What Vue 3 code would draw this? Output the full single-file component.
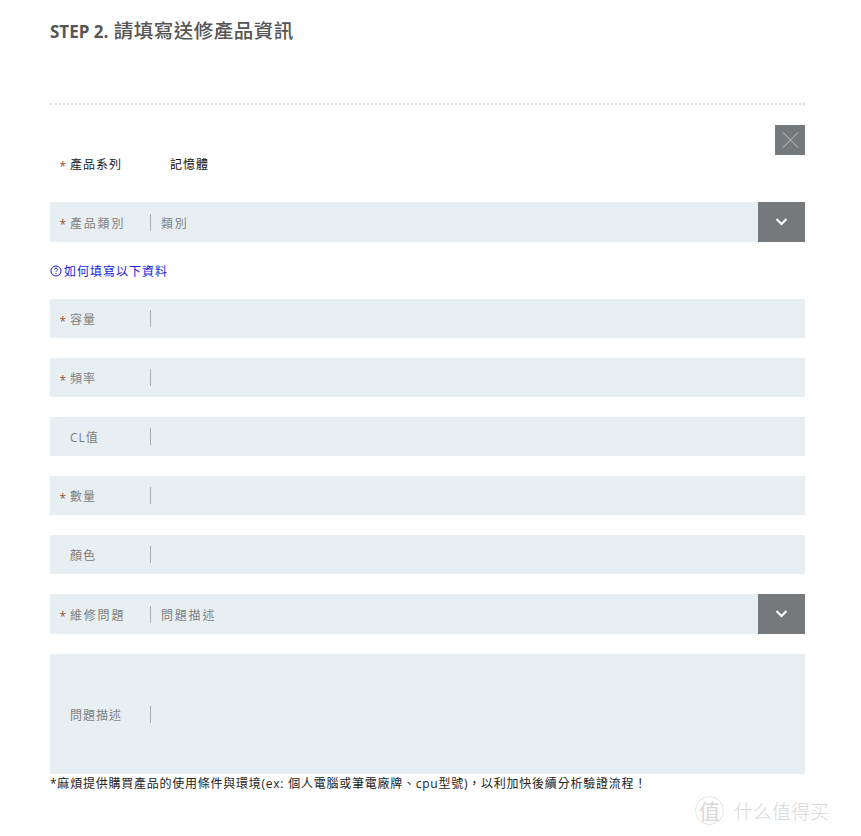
<script setup>
const rows = [
  { label: "容量", required: true },
  { label: "頻率", required: true },
  { label: "CL值", required: false },
  { label: "數量", required: true },
  { label: "顏色", required: false },
];
</script>

<template>
  <div class="page">
    <h2 class="title">STEP 2. <span class="title-cjk">請填寫送修產品資訊</span></h2>
    <div class="dots"></div>

    <div class="close-wrap">
      <button class="close" type="button">
        <svg width="30" height="30" viewBox="0 0 30 30">
          <path d="M8 7.5 23 22.5M23 7.5 8 22.5" stroke="#c4c6c8" stroke-width="1" fill="none" />
        </svg>
      </button>
    </div>

    <div class="series">
      <span class="star">*</span>
      <span class="series-label">產品系列</span>
      <span class="series-value">記憶體</span>
    </div>

    <div class="row select-row first-select">
      <span class="star">*</span>
      <span class="label wide">產品類別</span>
      <span class="value wide">類別</span>
      <span class="arrow">
        <svg width="14" height="10" viewBox="0 0 14 10">
          <path d="M1.5 2 6.5 7 11.5 2" stroke="#fff" stroke-width="2" fill="none" />
        </svg>
      </span>
    </div>

    <a class="help">
      <svg width="12" height="12" viewBox="0 0 12 12">
        <circle cx="6" cy="6" r="5" stroke="#1a1ae6" stroke-width="1" fill="none" />
        <path d="M4.4 4.8C4.4 3.8 5.1 3.2 6 3.2S7.6 3.8 7.6 4.6C7.6 5.6 6 5.8 6 7.1" stroke="#1a1ae6" stroke-width="1" fill="none" />
        <path d="M6 8.1V9.1" stroke="#1a1ae6" stroke-width="1" />
      </svg>
      <span>如何填寫以下資料</span>
    </a>

    <div class="list">
      <div v-for="r in rows" :key="r.label" class="row">
        <span class="star">{{ r.required ? "*" : "" }}</span>
        <span class="label">{{ r.label }}</span>
        <span class="value"></span>
      </div>
    </div>

    <div class="row select-row problem-select">
      <span class="star">*</span>
      <span class="label wide">維修問題</span>
      <span class="value wide">問題描述</span>
      <span class="arrow">
        <svg width="14" height="10" viewBox="0 0 14 10">
          <path d="M1.5 2 6.5 7 11.5 2" stroke="#fff" stroke-width="2" fill="none" />
        </svg>
      </span>
    </div>

    <div class="row area">
      <span class="star"></span>
      <span class="label">問題描述</span>
      <span class="value"></span>
    </div>

    <p class="note">*麻煩提供購買產品的使用條件與環境(ex: 個人電腦或筆電廠牌、cpu型號)，以利加快後續分析驗證流程！</p>

    <div class="watermark">
      <span class="mark">值</span>
      <span class="mark-text">什么值得买</span>
    </div>
  </div>
</template>

<style scoped>
.page {
  position: relative;
  box-sizing: border-box;
  width: 861px;
  height: 836px;
  padding: 0 56px 0 50px;
  overflow: hidden;
  background: #fff;
  font-family: "Open Sans", "Noto Sans CJK TC", sans-serif;
}

.title {
  margin: 0;
  padding-top: 18px;
  height: 103px;
  box-sizing: border-box;
  font-size: 17px;
  line-height: 25px;
  font-weight: 700;
  color: #555;
}

.title-cjk {
  margin-left: 1px;
  font-size: 19.5px;
  font-weight: 500;
  letter-spacing: 0.5px;
}

.dots {
  height: 0;
  border-top: 2px dotted #dcdfe0;
}

.close-wrap {
  display: flex;
  justify-content: flex-end;
  margin-top: 20px;
}

.close {
  display: block;
  width: 30px;
  height: 30px;
  padding: 0;
  border: 0;
  background: #75797c;
}

.series {
  display: flex;
  align-items: center;
  height: 20px;
  margin-top: -1px;
  font-size: 12px;
  color: #222;
}

.series-label {
  width: 100px;
  letter-spacing: 1px;
}

.series-value {
  letter-spacing: 1px;
  color: #111;
}

.star {
  box-sizing: border-box;
  width: 20px;
  padding: 6px 0 0 9.5px;
  font-size: 12px;
  line-height: 16px;
  color: #a5501f;
}

.row {
  position: relative;
  display: flex;
  align-items: center;
  height: 39px;
  background: #e8eff2;
  font-size: 12px;
  color: #808080;
}

.label {
  box-sizing: border-box;
  width: 80px;
  height: 17px;
  padding-top: 1px;
  line-height: 17px;
  letter-spacing: 1px;
}

.value {
  height: 17px;
  line-height: 19px;
  padding-left: 10px;
  border-left: 1px solid #a9aeb0;
  letter-spacing: 1.5px;
}

.wide {
  letter-spacing: 1.8px;
}

.select-row {
  height: 40px;
}

.first-select {
  margin-top: 28px;
}

.arrow {
  position: absolute;
  top: 0;
  right: 0;
  display: flex;
  align-items: center;
  justify-content: center;
  width: 47px;
  height: 40px;
  background: #75797c;
}

.help {
  display: flex;
  align-items: center;
  gap: 2px;
  height: 18px;
  margin: 20px 0 19px;
  font-size: 12px;
  letter-spacing: 1px;
  color: #1a1ae6;
}

.list {
  display: flex;
  flex-direction: column;
  gap: 20px;
}

.problem-select {
  margin-top: 20px;
}

.area {
  height: 120px;
  margin-top: 20px;
}

.note {
  margin: 0;
  padding-top: 1px;
  font-size: 12px;
  line-height: 18px;
  letter-spacing: 0.76px;
  color: #222;
}

.watermark {
  position: absolute;
  left: 695px;
  top: 796px;
  display: flex;
  align-items: center;
  gap: 10px;
  color: #d8d8d8;
  font-family: "Noto Sans CJK SC", sans-serif;
}

.mark {
  display: block;
  width: 27px;
  height: 27px;
  border: 1px solid #e4e4e4;
  border-radius: 50%;
  font-size: 21px;
  line-height: 26px;
  text-align: center;
}

.mark-text {
  font-size: 19px;
  line-height: 27px;
  font-weight: 300;
}
</style>
